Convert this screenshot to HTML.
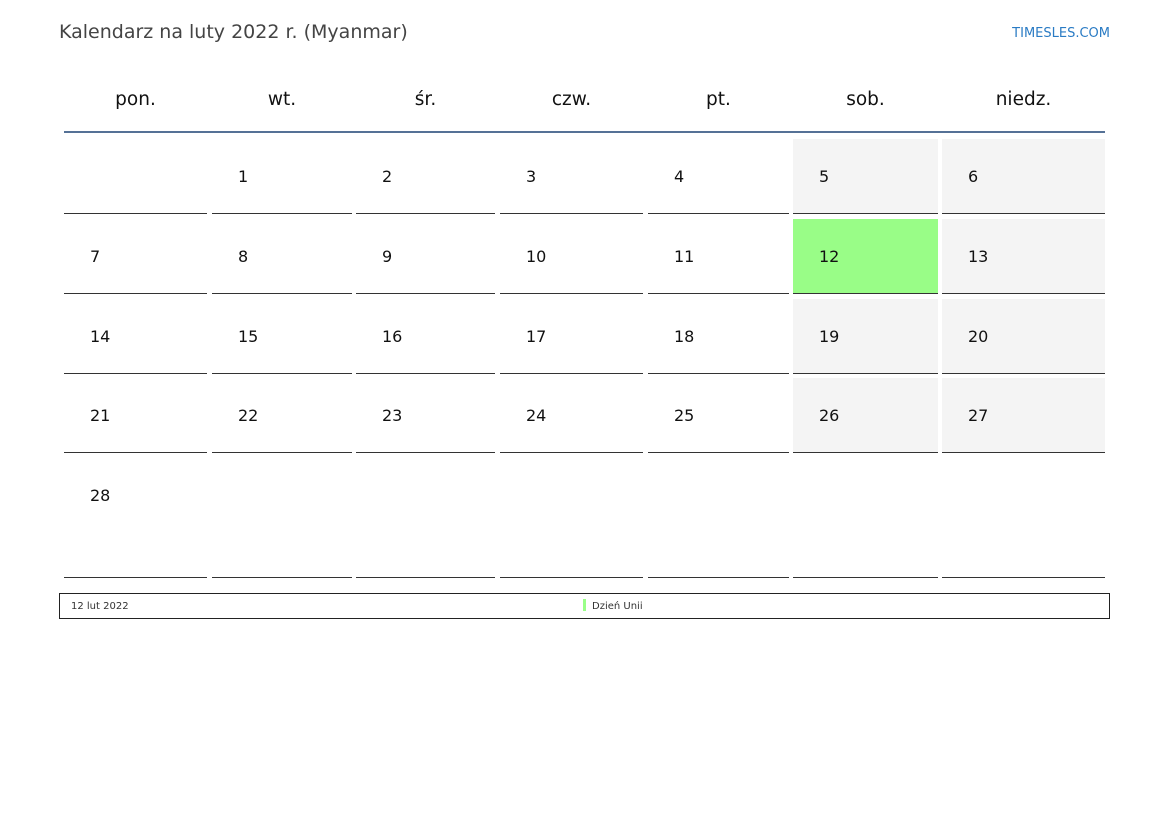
<!DOCTYPE html>
<html><head><meta charset="utf-8"><style>
body{margin:0;width:1169px;height:827px;background:#fff;font-family:"DejaVu Sans","Liberation Sans",sans-serif;position:relative;overflow:hidden}
.a{position:absolute}
.t{left:59px;top:21px;font-size:19px;color:#444}
.l{right:59px;top:26px;font-size:13px;color:#2a7bc4}
.h{top:89px;font-size:18.5px;color:#111;text-align:center}
.c{position:absolute;border-bottom:1px solid #333;box-sizing:border-box}
.n{position:absolute;font-size:16px;color:#111}
</style></head><body>
<div class="a t">Kalendarz na luty 2022 r. (Myanmar)</div>
<div class="a l">TIMESLES.COM</div>
<div id="g"></div>
<div class="a" style="left:64px;top:131px;width:1041px;height:2px;background:#557196"></div>
<div class="a" style="left:59px;top:593px;width:1049px;height:24px;border:1px solid #222"></div>
<div class="a" style="left:71px;top:601px;font-size:10px;color:#333">12 lut 2022</div>
<div class="a" style="left:583px;top:599px;width:3px;height:12px;background:#99ff88"></div>
<div class="a" style="left:592px;top:601px;font-size:10px;color:#333">Dzień Unii</div>
<script>
var cols=[[64,207],[212,352],[356,495],[500,643],[648,789],[793,938],[942,1105]];
var hd=["pon.","wt.","śr.","czw.","pt.","sob.","niedz."];
var rows=[[139,214],[219,294],[299,374],[378,453],[458,578]];
var h="";
cols.forEach(function(c,i){h+='<div class="a h" style="left:'+c[0]+'px;width:'+(c[1]-c[0])+'px">'+hd[i]+'</div>';});
rows.forEach(function(r,ri){cols.forEach(function(c,ci){
var d=ri*7+ci; var bg='transparent';
if(ci>=5&&ri<4)bg='#f4f4f4'; if(d==12)bg='#99fd87';
h+='<div class="c" style="left:'+c[0]+'px;top:'+r[0]+'px;width:'+(c[1]-c[0])+'px;height:'+(r[1]-r[0])+'px;background:'+bg+'"></div>';
if(d>=1&&d<=28){var ny=ri==4?486:r[0]+28;h+='<div class="n" style="left:'+(c[0]+26)+'px;top:'+ny+'px">'+d+'</div>';}
});});
document.getElementById("g").innerHTML=h;
</script>
</body></html>
